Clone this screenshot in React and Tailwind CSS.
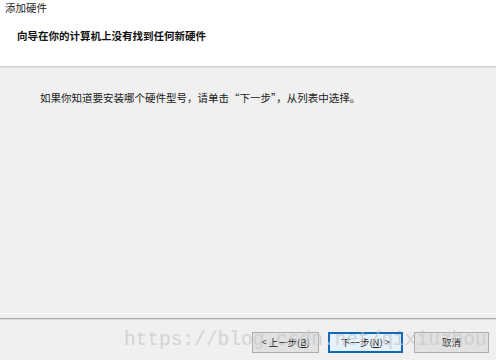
export default function App() {
  const cjk = { fontFamily: '"Microsoft YaHei", "Noto Sans CJK SC", "Noto Sans", sans-serif' };
  return (
    <div className="relative w-[496px] h-[360px] bg-[#f0f0f0] flex flex-col overflow-hidden text-[#000]" style={cjk}>
      <div className="h-[66px] bg-white flex flex-col shrink-0">
        <div className="pl-[5px] pt-[1px] text-[10.5px] leading-[14px] text-[#222]">添加硬件</div>
        <div className="pl-[17px] mt-[14px] text-[10.5px] leading-[14px] font-bold text-[#111]">向导在你的计算机上没有找到任何新硬件</div>
      </div>
      <div className="h-px bg-[#cdcdcd] shrink-0" />
      <div className="h-px bg-[#e2e2e2] shrink-0" />
      <div className="flex-1 flex flex-col">
        <div className="pl-[40px] pt-[23px] text-[10.5px] leading-[14px] text-[#1a1a1a]">
          如果你知道要安装哪个硬件型号，请单击“下一步”，从列表中选择。
        </div>
      </div>
      <div className="h-px bg-[#f7f7f7] shrink-0" />
      <div className="h-[4px] shrink-0" />
      <div className="h-px bg-[#a9a9a9] shrink-0" />
      <div className="h-px bg-[#dcdcdc] shrink-0" />
      <div className="h-[40px] shrink-0 flex items-start pt-[12px] pl-[252px] gap-0">
        <button className="w-[67px] h-[21px] bg-[#e1e1e1] border border-[#adadad] text-[9.5px] leading-none text-[#222] flex items-center justify-center">
          &lt; 上一步(<span className="underline">B</span>)
        </button>
        <button className="ml-[9px] w-[75px] h-[21px] bg-[#e5f1fb] border-2 border-[#0f68b8] text-[9.5px] leading-none text-[#222] flex items-center justify-center">
          下一步(<span className="underline">N</span>) &gt;
        </button>
        <button className="ml-[11px] w-[75px] h-[21px] bg-[#e1e1e1] border border-[#adadad] text-[9.5px] leading-none text-[#222] flex items-center justify-center">
          取消
        </button>
      </div>
      <div
        className="absolute left-[124px] top-[328px] text-[19.5px] leading-[24px] text-[#c8c8c8] opacity-70 pointer-events-none whitespace-nowrap"
        style={{ fontFamily: '"Liberation Mono", monospace' }}
      >
        https://blog.csdn.net/qixiuzhou
      </div>
    </div>
  );
}
